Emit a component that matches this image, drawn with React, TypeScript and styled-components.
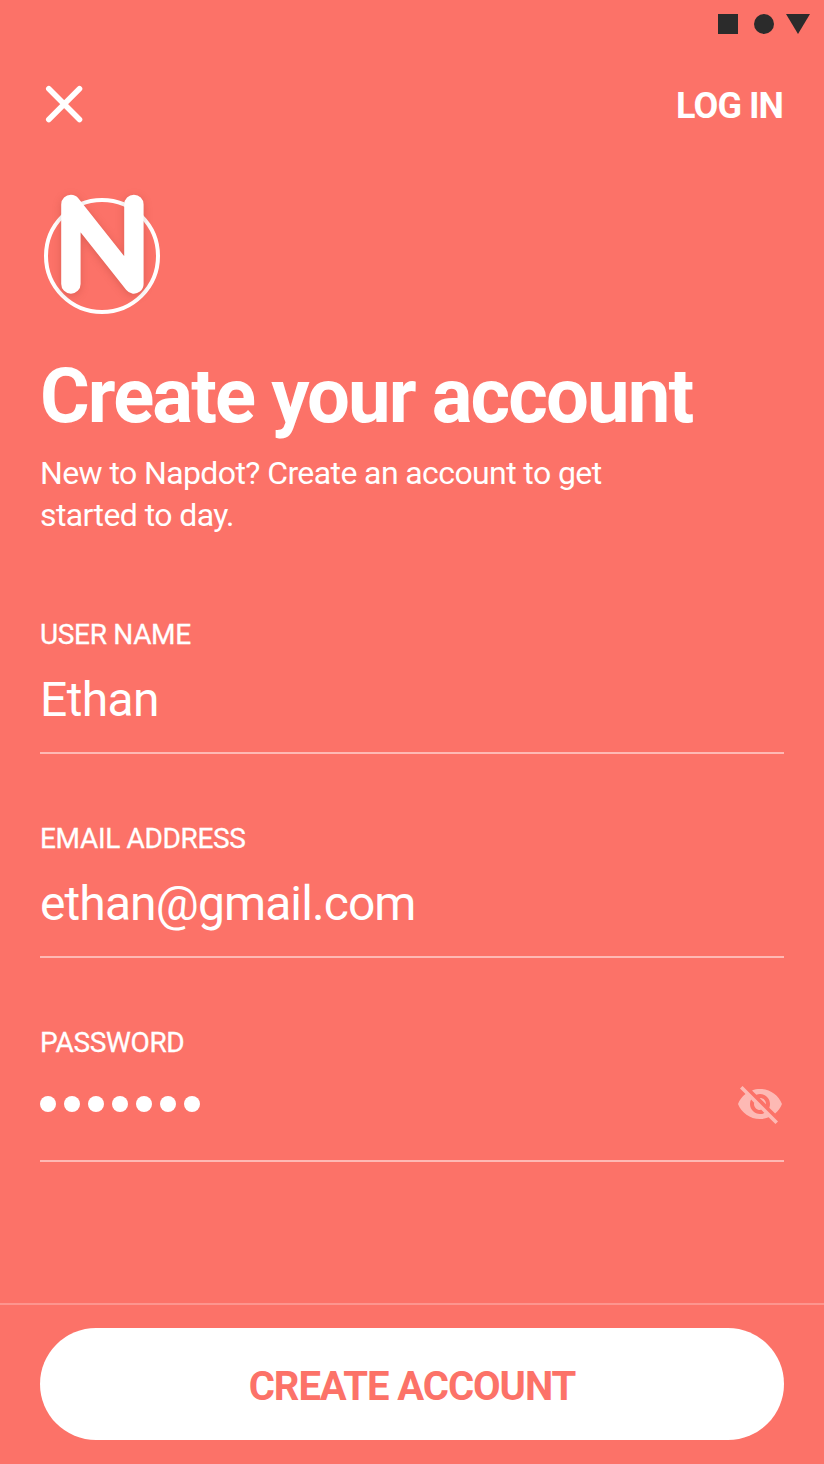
import React from 'react';
import styled, { createGlobalStyle } from 'styled-components';

const Global = createGlobalStyle`
  * { box-sizing: border-box; }
  body { margin: 0; background: #fc7268; font-family: Roboto, sans-serif; color: #fff; }
`;
const Screen = styled.div`
  width: 824px; height: 1464px; display: flex; flex-direction: column; background: #fc7268; overflow: hidden;
`;
const StatusBar = styled.div`
  height: 48px; flex: none; display: flex; justify-content: flex-end;
`;
const Header = styled.header`
  height: 112px; flex: none; display: flex; justify-content: space-between; align-items: center; padding: 0 40px;
`;
const IconButton = styled.button`
  border: 0; padding: 0; background: none; color: inherit; display: flex;
`;
const LogIn = styled.a`
  padding: 4px 1px 0 0; font-size: 36px; font-weight: 700; line-height: 42px; letter-spacing: -0.95px;
`;
const Main = styled.main`
  flex: 1; padding: 24px 40px 0; display: flex; flex-direction: column;
`;
const Logo = styled.svg`
  flex: none;
  path { filter: drop-shadow(0 2px 4px rgba(120, 30, 20, .22)); }
`;
const Title = styled.h1`
  margin: 22px 0 0; font-size: 76px; line-height: 92px; font-weight: 700; letter-spacing: -1.86px; white-space: nowrap;
`;
const Intro = styled.p`
  margin: 10px 0 0; width: 620px; font-size: 32px; line-height: 42px; letter-spacing: -0.6px;
`;
const Form = styled.div`
  margin-top: 78px; display: flex; flex-direction: column; gap: 64px;
`;
const Field = styled.div`
  height: 140px; display: flex; flex-direction: column; border-bottom: 2px solid rgba(255,255,255,.5);
`;
const Label = styled.div`
  padding-top: 1px; font-size: 28px; line-height: 40px; font-weight: 400; letter-spacing: -0.33px;
  -webkit-text-stroke: 0.3px #fff;
`;
const Value = styled.div<{ $tracking: number }>`
  margin-top: 15px; height: 60px; font-size: 48px; line-height: 60px; letter-spacing: ${p => p.$tracking}px;
`;
const PasswordRow = styled.div`
  margin-top: 17px; height: 48px; display: flex; align-items: center; justify-content: space-between;
`;
const Dots = styled.div`display: flex; gap: 8px;`;
const Dot = styled.span`width: 16px; height: 16px; border-radius: 50%; background: #fff;`;
const Footer = styled.footer`
  height: 161px; flex: none; padding: 23px 40px 0; border-top: 2px solid rgba(255,255,255,.25);
`;
const Submit = styled.button`
  width: 100%; height: 112px; border: 0; border-radius: 56px; background: #fff; color: #fc7268;
  font: 700 40px/48px Roboto, sans-serif; letter-spacing: -1.05px; padding: 6px 0 0;
`;

export default function App() {
  return (
    <Screen>
      <Global />
      <StatusBar>
        <svg width="110" height="48" fill="#2b2b2b">
          <rect x="4" y="14" width="20" height="20" />
          <circle cx="50" cy="24" r="10" />
          <path d="M72 14h24L84 34z" />
        </svg>
      </StatusBar>
      <Header>
        <IconButton aria-label="Close">
          <svg width="48" height="48" fill="none" stroke="#fff" strokeWidth="5.6" strokeLinecap="round">
            <path d="M8.8 8.8l30.7 30.7M39.5 8.8L8.8 39.5" />
          </svg>
        </IconButton>
        <LogIn>LOG IN</LogIn>
      </Header>
      <Main>
        <Logo width="124" height="144" fill="none">
          <circle cx="62" cy="72" r="56" stroke="#fff" strokeWidth="4" />
          <path d="M30.9 100V20.4L93.9 100V20.4" stroke="#fff" strokeWidth="19.4" strokeLinecap="round" strokeLinejoin="round" />
        </Logo>
        <Title>Create your account</Title>
        <Intro>New to Napdot? Create an account to get started to day.</Intro>
        <Form>
          <Field><Label>USER NAME</Label><Value $tracking={-0.65}>Ethan</Value></Field>
          <Field><Label>EMAIL ADDRESS</Label><Value $tracking={-0.9}>ethan@gmail.com</Value></Field>
          <Field>
            <Label>PASSWORD</Label>
            <PasswordRow>
              <Dots>{Array.from({ length: 7 }, (_, i) => <Dot key={i} />)}</Dots>
              <svg width="48" height="48" viewBox="0 0 24 24" fill="#fff" opacity=".5">
                <path d="M12 7c2.76 0 5 2.24 5 5 0 .65-.13 1.26-.36 1.83l2.92 2.92c1.51-1.26 2.7-2.89 3.43-4.75-1.73-4.39-6-7.5-11-7.5-1.4 0-2.74.25-3.98.7l2.16 2.16C10.74 7.13 11.35 7 12 7zM2 4.27l2.28 2.28.46.46C3.08 8.3 1.78 10.02 1 12c1.73 4.39 6 7.5 11 7.5 1.55 0 3.03-.3 4.38-.84l.42.42L19.73 22 21 20.73 3.27 3 2 4.27zM7.53 9.8l1.55 1.55c-.05.21-.08.43-.08.65 0 1.66 1.34 3 3 3 .22 0 .44-.03.65-.08l1.55 1.55c-.67.33-1.41.53-2.2.53-2.76 0-5-2.24-5-5 0-.79.2-1.53.53-2.2zm4.31-.78l3.15 3.15.02-.16c0-1.66-1.34-3-3-3l-.17.01z" />
              </svg>
            </PasswordRow>
          </Field>
        </Form>
      </Main>
      <Footer><Submit>CREATE ACCOUNT</Submit></Footer>
    </Screen>
  );
}
